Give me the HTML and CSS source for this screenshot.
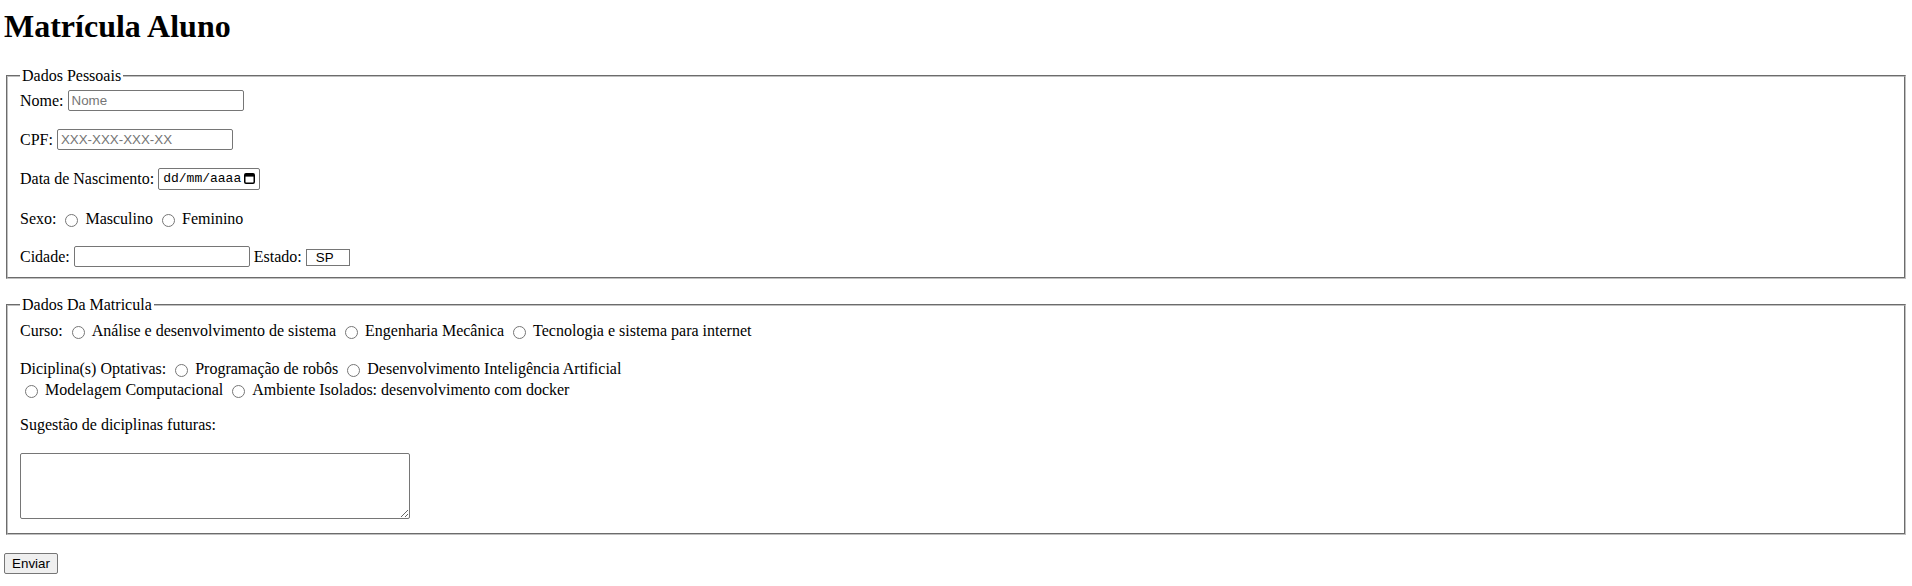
FILE: index.html
```html
<!DOCTYPE html>
<html lang="pt-BR">
<head>
<meta charset="utf-8">
<title>Matrícula Aluno</title>
<link rel="stylesheet" href="styles.css">
</head>
<body>
<h1 class="title">Matrícula Aluno</h1>
<form class="form">
  <fieldset class="group group-personal">
    <legend class="legend">Dados Pessoais</legend>
    <div class="row"><label class="label">Nome:</label><input class="field" type="text" placeholder="Nome"></div>
    <div class="row"><label class="label">CPF:</label><input class="field" type="text" placeholder="XXX-XXX-XXX-XX"></div>
    <div class="row"><label class="label">Data de Nascimento:</label><span class="date"><span class="date-text">dd/mm/aaaa</span><svg class="cal" width="11" height="11" viewBox="0 0 11 11"><rect x="0.75" y="0.75" width="9.5" height="9.5" rx="1.2" fill="none" stroke="#000" stroke-width="1.5"/><rect x="1" y="1" width="9" height="2.6" fill="#000"/></svg></span></div>
    <div class="row row-radio"><span class="label">Sexo:</span><input class="radio" type="radio" name="sexo"><label class="label">Masculino</label><input class="radio" type="radio" name="sexo"><label class="label">Feminino</label></div>
    <div class="row row-last"><label class="label">Cidade:</label><input class="field" type="text"><label class="label">Estado:</label><input class="uf" type="text" value="SP"></div>
  </fieldset>
  <fieldset class="group group-course">
    <legend class="legend">Dados Da Matricula</legend>
    <div class="line line-gap"><span class="label">Curso:</span><input class="radio" type="radio" name="curso"><label class="label">Análise e desenvolvimento de sistema</label><input class="radio" type="radio" name="curso"><label class="label">Engenharia Mecânica</label><input class="radio" type="radio" name="curso"><label class="label">Tecnologia e sistema para internet</label></div>
    <div class="line"><span class="label">Diciplina(s) Optativas:</span><input class="radio" type="radio" name="opt1"><label class="label">Programação de robôs</label><input class="radio" type="radio" name="opt2"><label class="label">Desenvolvimento Inteligência Artificial</label></div>
    <div class="line line-wrap"><input class="radio" type="radio" name="opt3"><label class="label">Modelagem Computacional</label><input class="radio" type="radio" name="opt4"><label class="label">Ambiente Isolados: desenvolvimento com docker</label></div>
    <div class="line line-gap"><label class="label">Sugestão de diciplinas futuras:</label></div>
    <textarea class="notes"></textarea>
  </fieldset>
  <div class="actions"><button class="submit" type="submit">Enviar</button></div>
</form>
</body>
</html>
```
FILE: styles.css
```css
body {
  margin: 0 4px;
  font-family: "Liberation Serif", "Times New Roman", serif;
  font-size: 16px;
  color: #000;
  background: #fff;
}

.title {
  margin: 8px 0 0;
  font-size: 32px;
  line-height: 36px;
  font-weight: bold;
}

.form {
  margin: 0;
}

.group {
  margin: 23px 2px 0;
  padding: 5px 12px 10px;
  min-width: 0;
  border: 2px groove rgb(192, 192, 192);
}

.group-course {
  margin-top: 17px;
  padding: 7px 12px 14px;
}

.legend {
  padding: 0 2px;
  line-height: 18px;
}

.row {
  display: flex;
  align-items: center;
  gap: 4px;
  height: 21px;
  margin-bottom: 18px;
}

.row-radio {
  box-sizing: border-box;
  padding-top: 3px;
}

.row-last {
  margin-bottom: 0;
}

.line {
  display: flex;
  align-items: center;
  gap: 4px;
  height: 20px;
}

.line-wrap {
  margin-top: 1px;
  margin-bottom: 15px;
}

.line-gap {
  margin-bottom: 18px;
}

.label {
  white-space: nowrap;
}

.field {
  box-sizing: border-box;
  width: 176px;
  height: 21px;
  margin: 0;
  padding: 1px 3px;
  border: 1px solid #767676;
  border-radius: 2px;
  font-family: "Liberation Sans", Arial, sans-serif;
  font-size: 13.33px;
  color: #000;
  background: #fff;
}

.field::placeholder {
  color: #757575;
}

.date {
  box-sizing: border-box;
  display: flex;
  align-items: center;
  justify-content: space-between;
  width: 102px;
  height: 22px;
  padding: 0 4px;
  border: 1px solid #767676;
  border-radius: 2px;
  font-family: "Liberation Mono", "Courier New", monospace;
  font-size: 13px;
  color: #000;
  background: #fff;
}

.cal {
  display: block;
}

.radio {
  width: 13px;
  height: 13px;
  margin: 3px 3px 0 5px;
}

.uf {
  box-sizing: border-box;
  width: 44px;
  height: 17px;
  margin: 2px 0 0;
  padding: 0 0 0 9px;
  border: 1px solid #767676;
  border-radius: 0;
  font-family: "Liberation Sans", Arial, sans-serif;
  font-size: 13.33px;
  color: #000;
  background: #fff;
}

.notes {
  display: block;
  box-sizing: border-box;
  width: 390px;
  height: 66px;
  margin: 0;
  padding: 2px;
  border: 1px solid #767676;
  border-radius: 2px;
  font-family: "Liberation Mono", monospace;
  font-size: 13.33px;
}

.actions {
  margin-top: 18px;
}

.submit {
  box-sizing: border-box;
  width: 54px;
  height: 21px;
  margin: 0;
  padding: 1px 6px;
  border: 1px solid #767676;
  border-radius: 2px;
  background: #efefef;
  font-family: "Liberation Sans", Arial, sans-serif;
  font-size: 13.33px;
  color: #000;
}
```
